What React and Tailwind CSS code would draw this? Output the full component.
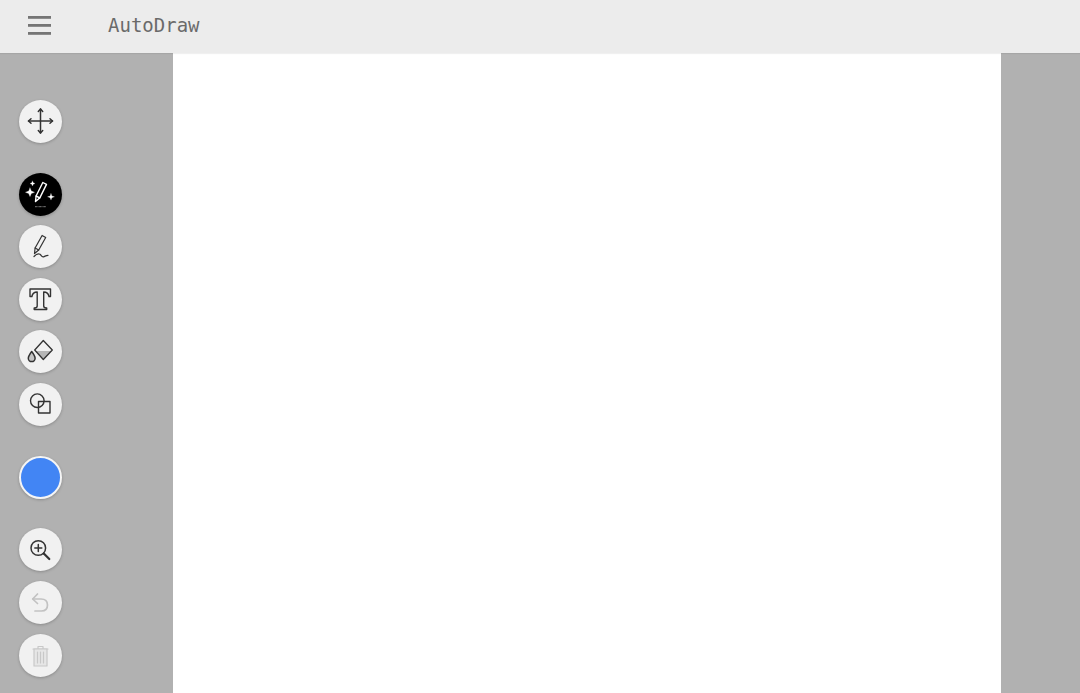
function RoundButton({ children, className = "" }) {
    return (
        <button className={"w-[43px] h-[43px] shrink-0 rounded-full bg-[#f1f1f1] flex items-center justify-center shadow-[0_1px_3px_rgba(0,0,0,0.22)] " + className}>
            {children}
        </button>
    );
}

function Icon({ children, stroke = "#333", fill = "none", width = 1.3 }) {
    return (
        <svg width="43" height="43" viewBox="0 0 43 43" fill={fill} stroke={stroke} strokeWidth={width} strokeLinecap="round" strokeLinejoin="round">
            {children}
        </svg>
    );
}

function MoveIcon() {
    return (
        <Icon width={1.5}>
            <path d="M21.500 9v24M9.500 21h24" />
            <path d="M19.300 11.500l2.200-2.500 2.200 2.500M19.300 30.500l2.200 2.500 2.200-2.500M12 18.800L9.500 21l2.500 2.200M31 18.800l2.500 2.200-2.500 2.200" />
        </Icon>
    );
}

function MagicIcon() {
    return (
        <Icon stroke="#fff" width={1.4}>
            <path d="M16.500 28.500l.6-5.500 6.700-13.500 3.700 1.900-6.700 13.500z" />
            <path d="M17 23l3.800 1.800" />
            <path d="M16 33.700h11" strokeWidth="1" strokeDasharray="0.8 0.5" strokeLinecap="butt" stroke="#999" />
            <path d="M11 15l1.300 3 3.200 1.300-3.200 1.300-1.300 3-1.300-3-3.200-1.300 3.200-1.300z" fill="#fff" strokeWidth="0.3" />
            <path d="M13.500 8l.8 1.700 1.700.8-1.700.8-.8 1.700-.8-1.700-1.700-.8 1.700-.8z" fill="#fff" strokeWidth="0.2" />
            <path d="M32 20.500l.9 2.400 2.600.9-2.600.9-.9 2.400-.9-2.400-2.600-.9 2.600-.9z" fill="#fff" strokeWidth="0.2" />
        </Icon>
    );
}

function PencilIcon() {
    return (
        <Icon width={1.2}>
            <path d="M15.500 28.500l.6-5.500 7-12.500 3.600 2-7 12.500z" />
            <path d="M16.100 23l3.600 2" />
            <path d="M15 31.500c1.800-2 4.500-3.200 6-2.200 1.500 1 1.500 3 3.500 2.500 1.500-.4 2.500-1.500 4.500-1.500" />
        </Icon>
    );
}

function TextIcon() {
    return (
        <Icon width={1.4}>
            <path d="M11 11h20.500v7.500h-1.500c-.6-3.200-1.700-4.500-5.300-4.500v14c0 1.300.8 2 3 2v1.500H15.200V30c2.200 0 3-.7 3-2V14c-3.600 0-4.700 1.300-5.300 4.500H11z" />
        </Icon>
    );
}

function FillIcon() {
    return (
        <Icon width={1.3}>
            <path d="M16.500 21h15.600l-7.800 8.500z" fill="#b5b5b5" stroke="none" />
            <path d="M24.300 10.500l9 9.500-9 9.500-8.600-9.500z" />
            <path d="M12.700 21.500c2.400 3.200 3.400 4.800 3.400 6.700a3.400 3.400 0 0 1-6.800 0c0-1.900 1-3.500 3.400-6.700z" fill="#c4c4c4" strokeWidth="1.5" />
        </Icon>
    );
}

function ShapesIcon() {
    return (
        <Icon width={1.4}>
            <circle cx="18.300" cy="17.700" r="6.800" />
            <rect x="19.500" y="18.500" width="11.500" height="11.500" />
        </Icon>
    );
}

function ZoomIcon() {
    return (
        <Icon width={1.5}>
            <circle cx="19.300" cy="20" r="7.300" />
            <path d="M19.300 16.500v7M15.800 20h7" />
            <path d="M24.800 25.500l5.500 5.500" strokeWidth="2.200" />
        </Icon>
    );
}

function UndoIcon() {
    return (
        <Icon stroke="#c2c2c2" width={1.7}>
            <path d="M18.500 13l-4.800 5 4.800 4.500" />
            <path d="M14 18h8c4.500 0 6.500 2.500 6.500 6s-2 6-6 6H16" />
        </Icon>
    );
}

function TrashIcon() {
    return (
        <Icon stroke="#c8c8c8" width={1.2}>
            <path d="M14 15h15M19 15v-2.500h5V15" />
            <rect x="15" y="15" width="13" height="17" fill="#e6e6e6" />
            <path d="M18.500 18v11M21.500 18v11M24.500 18v11" />
        </Icon>
    );
}

export default function App() {
    return (
        <div className="w-[1080px] h-[693px] overflow-hidden flex flex-col bg-[#b1b1b1]" style={{ fontFamily: '"DejaVu Sans Mono", monospace' }}>
            <header className="h-[53px] shrink-0 bg-[#ececec] flex items-center pb-[2px] shadow-[0_1px_1px_rgba(0,0,0,0.06)] z-10">
                <svg className="ml-[28px]" width="23" height="19" viewBox="0 0 23 19" fill="#757575">
                    <rect x="0" y="0" width="23" height="2.800" />
                    <rect x="0" y="8" width="23" height="2.800" />
                    <rect x="0" y="16" width="23" height="2.800" />
                </svg>
                <span className="ml-[57px] text-[19px] text-[#6a6a6a]">AutoDraw</span>
            </header>
            <div className="flex flex-1 min-h-0">
                <aside className="w-[173px] shrink-0 flex flex-col pl-[19px] pt-[47px]">
                    <RoundButton><MoveIcon /></RoundButton>
                    <RoundButton className="mt-[30px] !bg-black"><MagicIcon /></RoundButton>
                    <RoundButton className="mt-[9px]"><PencilIcon /></RoundButton>
                    <RoundButton className="mt-[10px]"><TextIcon /></RoundButton>
                    <RoundButton className="mt-[9px]"><FillIcon /></RoundButton>
                    <RoundButton className="mt-[10px]"><ShapesIcon /></RoundButton>
                    <button className="mt-[30px] w-[43px] h-[43px] shrink-0 rounded-full bg-[#4285f4] border-2 border-[#f5f5f5] shadow-[0_1px_3px_rgba(0,0,0,0.22)]"></button>
                    <RoundButton className="mt-[29px]"><ZoomIcon /></RoundButton>
                    <RoundButton className="mt-[10px]"><UndoIcon /></RoundButton>
                    <RoundButton className="mt-[10px]"><TrashIcon /></RoundButton>
                </aside>
                <main className="w-[828px] shrink-0 bg-white"></main>
            </div>
        </div>
    );
}
